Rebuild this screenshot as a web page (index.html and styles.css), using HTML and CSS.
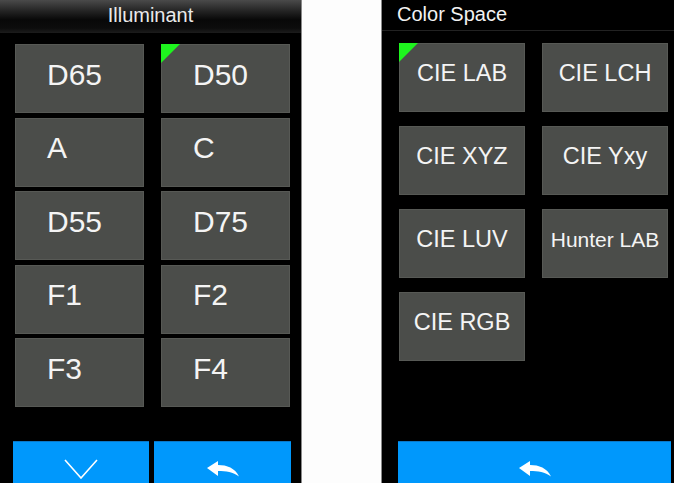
FILE: index.html
```html
<!DOCTYPE html>
<html>
<head>
<meta charset="utf-8">
<link rel="stylesheet" href="styles.css">
</head>
<body>
<div class="screen">
  <section class="panel panel-left">
    <header class="title-bar">Illuminant</header>
    <div class="grid grid-ill">
      <div class="btn">D65</div>
      <div class="btn selected">D50</div>
      <div class="btn">A</div>
      <div class="btn">C</div>
      <div class="btn">D55</div>
      <div class="btn">D75</div>
      <div class="btn">F1</div>
      <div class="btn">F2</div>
      <div class="btn">F3</div>
      <div class="btn">F4</div>
    </div>
    <div class="footer footer-left">
      <div class="blue-btn">
        <svg width="34" height="20" viewBox="0 0 34 20"><path d="M1 1 L17 19 L33 1" fill="none" stroke="#fff" stroke-width="1.6"/></svg>
      </div>
      <div class="blue-btn">
        <svg width="32" height="16" viewBox="0 0 32 16"><path d="M0 7 L11 0 L11 4 C20 4 28 7 32 15.5 C26 11 19 10 11 10 L11 15 Z" fill="#fff"/></svg>
      </div>
    </div>
  </section>
  <div class="gap"></div>
  <section class="panel panel-right">
    <header class="title-plain">Color Space</header>
    <div class="grid grid-cs">
      <div class="btn cs selected">CIE LAB</div>
      <div class="btn cs">CIE LCH</div>
      <div class="btn cs">CIE XYZ</div>
      <div class="btn cs">CIE Yxy</div>
      <div class="btn cs">CIE LUV</div>
      <div class="btn cs small">Hunter LAB</div>
      <div class="btn cs">CIE RGB</div>
    </div>
    <div class="footer footer-right">
      <div class="blue-btn wide">
        <svg width="32" height="16" viewBox="0 0 32 16"><path d="M0 7 L11 0 L11 4 C20 4 28 7 32 15.5 C26 11 19 10 11 10 L11 15 Z" fill="#fff"/></svg>
      </div>
    </div>
  </section>
</div>
</body>
</html>
```
FILE: styles.css
```css
html, body {
  margin: 0;
  padding: 0;
  background: #fdfdfd;
  overflow: hidden;
}
.screen {
  display: flex;
  width: 674px;
  height: 483px;
  font-family: "Liberation Sans", Arial, sans-serif;
}
.panel {
  background: #000;
  height: 483px;
  display: flex;
  flex-direction: column;
  box-sizing: border-box;
}
.panel-left {
  width: 302px;
  border-right: 1px solid #8a8a8a;
}
.gap {
  width: 79px;
  flex: none;
}
.panel-right {
  width: 293px;
  border-left: 1px solid #8a8a8a;
}
.title-bar {
  height: 33px;
  box-sizing: border-box;
  background: linear-gradient(#4a4a4a 0%, #222 35%, #080808 60%, #0c0c0c 85%, #1c1c1c 100%);
  color: #eaeaea;
  font-size: 20px;
  text-align: center;
  line-height: 31px;
}
.title-plain {
  height: 31px;
  box-sizing: border-box;
  border-bottom: 1px solid #222;
  color: #f2f2f2;
  font-size: 20px;
  line-height: 29px;
  padding-left: 15px;
}
.grid {
  display: grid;
}
.grid-ill {
  grid-template-columns: 129px 129px;
  grid-auto-rows: 69px;
  column-gap: 17px;
  row-gap: 4.5px;
  padding: 11px 0 0 15px;
}
.grid-cs {
  grid-template-columns: 126px 126px;
  grid-auto-rows: 69px;
  column-gap: 17px;
  row-gap: 14px;
  padding: 12px 0 0 17px;
}
.btn {
  position: relative;
  background: #4b4d4a;
  border: 1px solid #575955;
  box-sizing: border-box;
  color: #f4f4f4;
  font-size: 30px;
  display: flex;
  align-items: center;
  padding: 0 0 8px 31px;
}
.btn.cs {
  font-size: 23.5px;
  justify-content: center;
  padding: 0 0 8px 0;
}
.btn.cs.small {
  font-size: 21px;
}
.btn.selected::before {
  content: "";
  position: absolute;
  left: -1px;
  top: -1px;
  width: 0;
  height: 0;
  border-top: 19px solid #1ef41e;
  border-right: 19px solid transparent;
}
.footer {
  margin-top: auto;
  display: flex;
  height: 42px;
}
.footer-left {
  padding-left: 13px;
  gap: 5px;
}
.footer-left .blue-btn {
  width: 136px;
}
.footer-left .blue-btn:last-child {
  width: 137px;
}
.footer-right {
  padding-left: 16px;
}
.blue-btn {
  background: #0098fc;
  border-top: 1px solid #0a78c8;
  box-sizing: border-box;
  display: flex;
  justify-content: center;
  align-items: center;
}
.blue-btn.wide {
  width: 273px;
  padding-top: 12px;
}
.footer-left .blue-btn svg {
  margin-top: 12px;
}
```
